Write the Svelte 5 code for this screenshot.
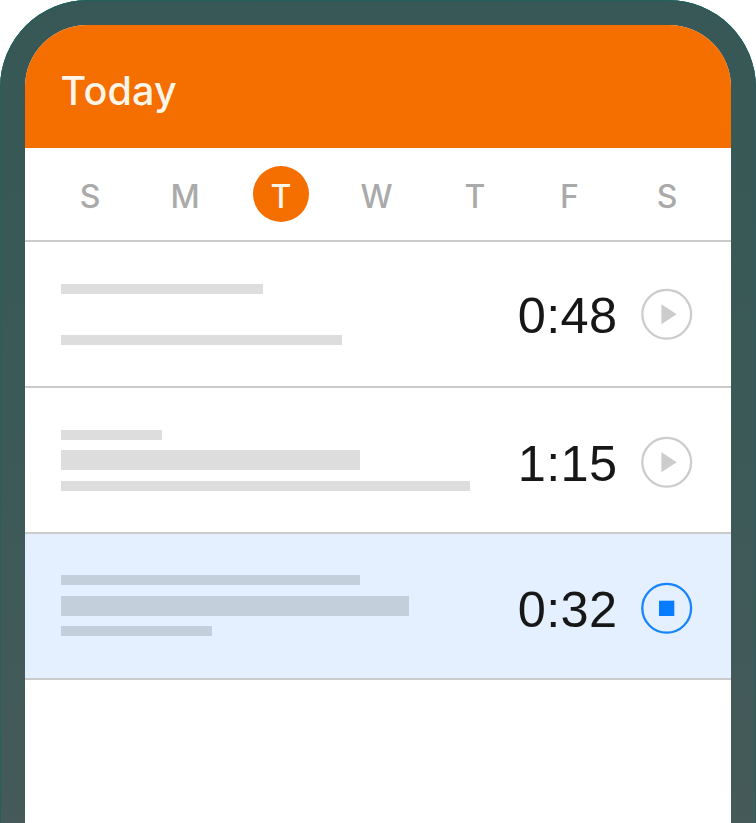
<script>
  const days = ['S', 'M', 'T', 'W', 'T', 'F', 'S'];
  const activeDay = 2;
  const entries = [
    { time: '0:48', running: false, size: 'sparse', bars: [202, 281] },
    { time: '1:15', running: false, size: 'low', bars: [101, 299, 409] },
    { time: '0:32', running: true, size: 'full', bars: [299, 347.5, 151] }
  ];
</script>

<main class="phone">
  <section class="screen">
    <header><h1>Today</h1></header>
    <nav>
      {#each days as day, i}
        <span class="day" class:active={i === activeDay}>{day}</span>
      {/each}
    </nav>
    {#each entries as entry}
      <article class={entry.size} class:running={entry.running}>
        <div class="bars">
          {#each entry.bars as width}
            <div class="bar" style="width: {width}px"></div>
          {/each}
        </div>
        <span class="time">{entry.time}</span>
        <button aria-label={entry.running ? 'Stop' : 'Start'}>
          <svg width="52" height="52" viewBox="0 0 52 52">
            <circle cx="25.7" cy="26.3" r="24.4" fill="none" stroke="currentColor" stroke-width="2.3" />
            {#if entry.running}
              <rect x="18" y="18.7" width="15.3" height="15.3" fill="currentColor" />
            {:else}
              <path d="M20.4 16.3v20l15.3-10z" fill="currentColor" />
            {/if}
          </svg>
        </button>
      </article>
    {/each}
  </section>
</main>

<style>
  :global(body) { background: #fff; }
  .phone {
    box-sizing: border-box;
    width: 756px;
    height: 823px;
    padding: 25px 25px 0;
    overflow: hidden;
    border-radius: 88px 88px 0 0;
    background: linear-gradient(#375856, #3a5957 45%, #455a59);
    box-shadow: inset 0 1px 0 #1c615c, inset 1px 0 0 #265f5b, inset -1px 0 0 #265f5b;
    font-family: Inter, "Liberation Sans", sans-serif;
  }
  .screen {
    width: 706px;
    height: 798px;
    overflow: hidden;
    border-radius: 62px 62px 0 0;
    background: #fff;
  }
  header {
    box-sizing: border-box;
    height: 123px;
    padding: 41px 35.5px 0;
    background: #f56e00;
  }
  h1 {
    margin: 0;
    color: #fff5e9;
    font-size: 39.5px;
    line-height: 51px;
    font-weight: 500;
    letter-spacing: 0.2px;
  }
  nav {
    box-sizing: border-box;
    display: grid;
    grid-template-columns: 95px 95px 97px 94px 103px 86px 109px;
    justify-items: center;
    height: 94px;
    padding: 18px 0 0 17.5px;
    border-bottom: 2px solid #cbcbcb;
  }
  .day {
    box-sizing: border-box;
    width: 56px;
    height: 56px;
    padding-top: 4px;
    border-radius: 50%;
    text-align: center;
    font-size: 32px;
    line-height: 54px;
    color: #aaa;
    font-weight: 500;
  }
  .active { background: #f56e00; color: #fff5e9; }
  article {
    box-sizing: border-box;
    display: flex;
    height: 146px;
    padding: 41.5px 38px 0 36.3px;
    border-bottom: 2px solid #cbcbcb;
  }
  .bars {
    display: flex;
    flex-direction: column;
    gap: 10.5px;
    width: 456px;
    flex: none;
  }
  .bar { height: 10.3px; background: #ddd; }
  .sparse .bars { gap: 41px; }
  .low .bar:nth-child(2), .full .bar:nth-child(2) { height: 20px; }
  .full .bars { margin-top: -0.8px; }
  .time {
    width: 109.5px;
    flex: none;
    margin: 3.5px 0 0 0.5px;
    font-family: "Liberation Sans", Arial, sans-serif;
    font-size: 50.5px;
    line-height: 58px;
    letter-spacing: 0.35px;
    color: #171717;
  }
  .low .time { margin-top: 5.5px; }
  .full .time { margin-top: 5.5px; }
  button {
    display: block;
    flex: none;
    width: 52px;
    height: 52px;
    margin: 4.5px 0 0 13.3px;
    padding: 0;
    border: 0;
    background: none;
    color: #ccc;
  }
  svg { display: block; }
  .low button, .full button { margin-top: 6.5px; }
  .running { background: #e4f0ff; }
  .running .bar { background: #c4cfdc; }
  .running button { color: #1683ff; }
  .running rect { fill: #087cff; }
</style>
